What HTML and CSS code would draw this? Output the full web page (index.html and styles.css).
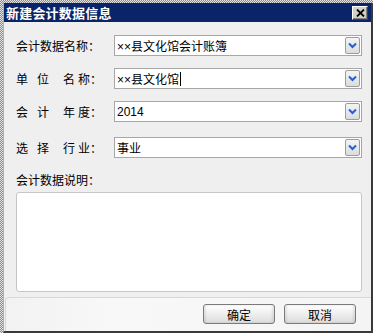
FILE: index.html
```html
<!DOCTYPE html>
<html lang="zh">
<head>
<meta charset="UTF-8">
<title>新建会计数据信息</title>
<link rel="stylesheet" href="styles.css">
</head>
<body>
<div class="screen">
    <!-- 对话框 -->
    <div class="window">
        <div class="title-bar">
            <div class="title">新建会计数据信息</div>
            <button class="close-btn">
                <svg width="9" height="8" viewBox="0 0 9 8"><path d="M1 0.5 L8 7.5 M8 0.5 L1 7.5" stroke="#000" stroke-width="1.8"/></svg>
            </button>
        </div>

        <div class="body">
            <div class="row">
                <label class="label">会计数据名称：</label>
                <div class="combo">
                    <span class="combo-text">××县文化馆会计账簿</span>
                    <span class="drop"><svg width="9" height="7" viewBox="0 0 9 7"><path d="M1 1.5 L4.5 5 L8 1.5" fill="none" stroke="#1f62d6" stroke-width="2"/></svg></span>
                </div>
            </div>
            <div class="row">
                <label class="label">单<i class="sp-a"></i>位<i class="sp-b"></i>名<i class="sp-c"></i>称：</label>
                <div class="combo">
                    <span class="combo-text">××县文化馆<i class="caret"></i></span>
                    <span class="drop"><svg width="9" height="7" viewBox="0 0 9 7"><path d="M1 1.5 L4.5 5 L8 1.5" fill="none" stroke="#1f62d6" stroke-width="2"/></svg></span>
                </div>
            </div>
            <div class="row">
                <label class="label">会<i class="sp-a"></i>计<i class="sp-b"></i>年<i class="sp-c"></i>度：</label>
                <div class="combo">
                    <span class="combo-text">2014</span>
                    <span class="drop"><svg width="9" height="7" viewBox="0 0 9 7"><path d="M1 1.5 L4.5 5 L8 1.5" fill="none" stroke="#1f62d6" stroke-width="2"/></svg></span>
                </div>
            </div>
            <div class="row row-last">
                <label class="label">选<i class="sp-a"></i>择<i class="sp-b"></i>行<i class="sp-c"></i>业：</label>
                <div class="combo">
                    <span class="combo-text">事业</span>
                    <span class="drop"><svg width="9" height="7" viewBox="0 0 9 7"><path d="M1 1.5 L4.5 5 L8 1.5" fill="none" stroke="#1f62d6" stroke-width="2"/></svg></span>
                </div>
            </div>

            <div class="memo-label">会计数据说明：</div>
            <div class="memo"></div>
        </div>

        <!-- 底部按钮 -->
        <div class="footer">
            <button class="btn">确定</button>
            <button class="btn">取消</button>
        </div>
    </div>
</div>
</body>
</html>
```

FILE: styles.css
```css
/* 全局 */
body, html {
    margin: 0;
    padding: 0;
}

body {
    font-family: "Liberation Sans", "Noto Sans CJK SC", sans-serif;
    font-size: 12px;
    color: #000;
}

/* 桌面背景（点状） */
.screen {
    width: 373px;
    height: 333px;
    padding-top: 3px;
    box-sizing: border-box;
    background-color: #c8c8c8;
    background-image: repeating-conic-gradient(#8a8a8a 0 25%, #e4e4e4 0 50%);
    background-size: 2px 2px;
    display: flex;
    justify-content: flex-end;
}

/* 窗口 */
.window {
    width: 370px;
    height: 330px;
    box-sizing: border-box;
    background: #efefef;
    border-left: 1px solid #b0b0b0;
    border-right: 2px solid #3a3a3a;
    border-bottom: 2px solid #3a3a3a;
    display: flex;
    flex-direction: column;
}

.title-bar {
    height: 19px;
    background: #0a246a;
    display: flex;
    align-items: center;
    justify-content: space-between;
    padding: 0 3px 0 2px;
}

.title {
    color: #fff;
    font-weight: bold;
    font-size: 13px;
    font-family: "Noto Sans CJK SC", sans-serif;
    letter-spacing: 0.2px;
}

.close-btn {
    width: 16px;
    height: 14px;
    padding: 0;
    margin: 0;
    background: #d4d0c8;
    border: 1px solid;
    border-color: #fff #404040 #404040 #fff;
    box-shadow: inset -1px -1px 0 #808080;
    display: flex;
    align-items: center;
    justify-content: center;
}

/* 表单区域 */
.body {
    padding: 13px 9px 0 12px;
    display: flex;
    flex-direction: column;
}

.row {
    display: flex;
    align-items: center;
    height: 21px;
    margin-bottom: 12px;
}

.row-last {
    margin-bottom: 0;
    margin-top: 3px;
}

.label {
    width: 86px;
    flex: none;
    margin-right: 12px;
    font-family: "Noto Sans CJK SC", sans-serif;
    white-space: nowrap;
    display: flex;
    align-items: center;
}

/* 标签字间距 */
.label i {
    display: inline-block;
}

.sp-a { width: 9px; }
.sp-b { width: 14px; }
.sp-c { width: 3px; }

.combo {
    flex: 1;
    height: 21px;
    box-sizing: border-box;
    border: 1px solid #a7a7a7;
    background: #fff;
    display: flex;
    align-items: center;
}

.combo-text {
    flex: 1;
    padding-left: 2px;
    font-size: 12px;
    white-space: nowrap;
    display: flex;
    align-items: center;
}

.caret {
    display: inline-block;
    width: 1px;
    height: 14px;
    background: #000;
    margin-left: 1px;
}

.drop {
    width: 15px;
    height: 17px;
    box-sizing: border-box;
    margin-right: 1px;
    border: 1px solid #9c9c9c;
    border-radius: 2px;
    background: linear-gradient(#f4f4f4, #dcdcdc);
    display: flex;
    align-items: center;
    justify-content: center;
}

.memo-label {
    margin-top: 14px;
    line-height: 16px;
    font-family: "Noto Sans CJK SC", sans-serif;
}

.memo {
    margin-top: 4px;
    height: 100px;
    box-sizing: border-box;
    border: 1px solid #c6c6c6;
    border-radius: 3px;
    background: #fff;
}

/* 底部 */
.footer {
    margin: 5px 0 0 1px;
    flex: 1;
    border-top: 1px solid #e3d6c9;
    border-left: 1px solid #e3d6c9;
    border-top-left-radius: 4px;
    background: linear-gradient(90deg, #f2f2f2, #f8f8f8 30%, #f4f4f4);
    display: flex;
    justify-content: flex-end;
    align-items: flex-start;
    gap: 9px;
    padding: 6px 15px 0 0;
}

.btn {
    width: 72px;
    height: 20px;
    padding: 0;
    border: 1px solid #7b7b7b;
    border-radius: 3px;
    background: linear-gradient(#ffffff, #f0f0f0 45%, #dcdcdc);
    box-shadow: inset 2px 0 2px rgba(0,0,0,0.08), inset -2px 0 2px rgba(0,0,0,0.08);
    font-family: "Noto Sans CJK SC", sans-serif;
    font-size: 12px;
    color: #000;
}
```
